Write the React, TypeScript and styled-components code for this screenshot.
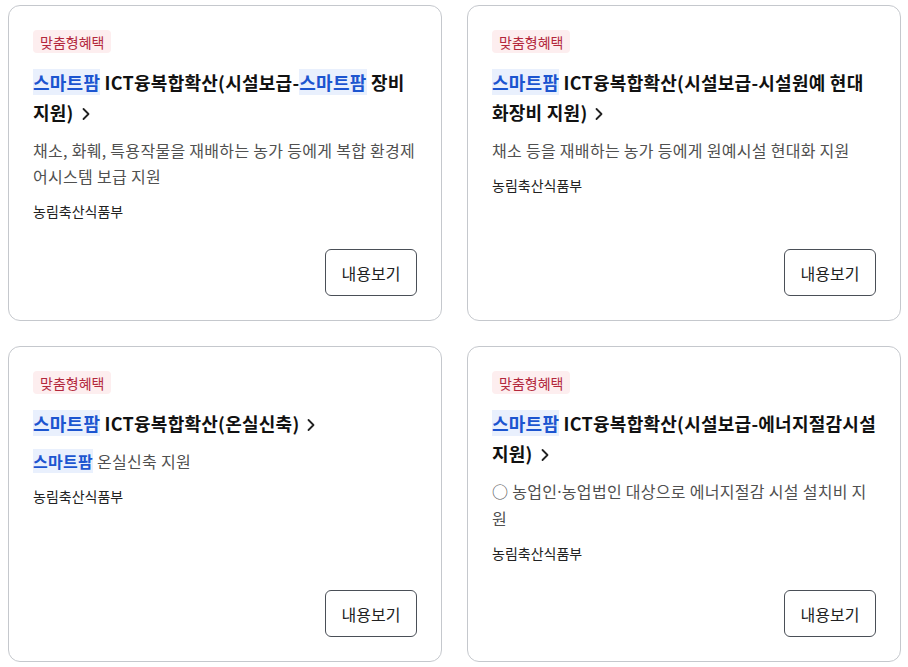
import React from "react";
import styled, { createGlobalStyle } from "styled-components";

const GlobalStyle = createGlobalStyle`
  body {
    margin: 0;
    background: #fff;
    font-family: "Noto Sans CJK KR", "Noto Sans", sans-serif;
    color: #222;
  }
`;

const Grid = styled.div`
  display: grid;
  grid-template-columns: 434px 434px;
  grid-auto-rows: 316px;
  column-gap: 25px;
  row-gap: 25px;
  padding: 5px 0 0 8px;
`;

const Card = styled.article`
  box-sizing: border-box;
  display: flex;
  flex-direction: column;
  align-items: flex-start;
  border: 1px solid #c5c8cd;
  border-radius: 12px;
  background: #fff;
  padding: 24px;
`;

const Badge = styled.span`
  display: inline-flex;
  align-items: center;
  height: 23px;
  padding: 0 7px;
  border-radius: 4px;
  background: #fdeeef;
  color: #b3283c;
  font-size: 14px;
`;

const Title = styled.h3`
  margin: 14px 0 0;
  font-size: 18px;
  font-weight: 700;
  line-height: 30px;
  letter-spacing: 0.25px;
  color: #111;
`;

const Mark = styled.span`
  background: #e9f0fd;
  color: #1c55d0;
  font-weight: 700;
`;

const Chevron = styled.svg`
  width: 16px;
  height: 16px;
  margin-left: 4px;
  vertical-align: -2px;
`;

const Desc = styled.p`
  margin: 10px 0 0;
  font-size: 16px;
  line-height: 26px;
  letter-spacing: 0.3px;
  color: #505050;
  word-break: break-all;
`;

const Dot = styled.span`
  font-family: "Noto Sans", sans-serif;
`;

const Org = styled.div`
  margin-top: 12px;
  font-size: 14px;
  line-height: 20px;
  color: #222;
`;

const Button = styled.button`
  margin-top: auto;
  align-self: flex-end;
  box-sizing: border-box;
  width: 92px;
  height: 47px;
  border: 1px solid #4a4f57;
  border-radius: 6px;
  background: #fff;
  color: #222;
  font-family: inherit;
  font-size: 16px;
  cursor: pointer;
`;

const Arrow = () => (
  <Chevron viewBox="0 0 16 16" fill="none" stroke="#222" strokeWidth="1.8" strokeLinecap="round" strokeLinejoin="round">
    <path d="M5.5 3 L10.5 8 L5.5 13" />
  </Chevron>
);

type Item = { title: React.ReactNode; desc: React.ReactNode };

const items: Item[] = [
  {
    title: (
      <>
        <Mark>스마트팜</Mark> ICT융복합확산(시설보급-<Mark>스마트팜</Mark> 장비 지원)
      </>
    ),
    desc: "채소, 화훼, 특용작물을 재배하는 농가 등에게 복합 환경제어시스템 보급 지원",
  },
  {
    title: (
      <>
        <Mark>스마트팜</Mark> ICT융복합확산(시설보급-시설원예 현대화장비 지원)
      </>
    ),
    desc: "채소 등을 재배하는 농가 등에게 원예시설 현대화 지원",
  },
  {
    title: (
      <>
        <Mark>스마트팜</Mark> ICT융복합확산(온실신축)
      </>
    ),
    desc: (
      <>
        <Mark>스마트팜</Mark> 온실신축 지원
      </>
    ),
  },
  {
    title: (
      <>
        <Mark>스마트팜</Mark> ICT융복합확산(시설보급-에너지절감시설 지원)
      </>
    ),
    desc: (
      <>
        ○ 농업인<Dot>·</Dot>농업법인 대상으로 에너지절감 시설 설치비 지원
      </>
    ),
  },
];

export default function App() {
  return (
    <>
      <GlobalStyle />
      <Grid>
        {items.map((item, i) => (
          <Card key={i}>
            <Badge>맞춤형혜택</Badge>
            <Title>
              {item.title}
              <Arrow />
            </Title>
            <Desc>{item.desc}</Desc>
            <Org>농림축산식품부</Org>
            <Button>내용보기</Button>
          </Card>
        ))}
      </Grid>
    </>
  );
}
